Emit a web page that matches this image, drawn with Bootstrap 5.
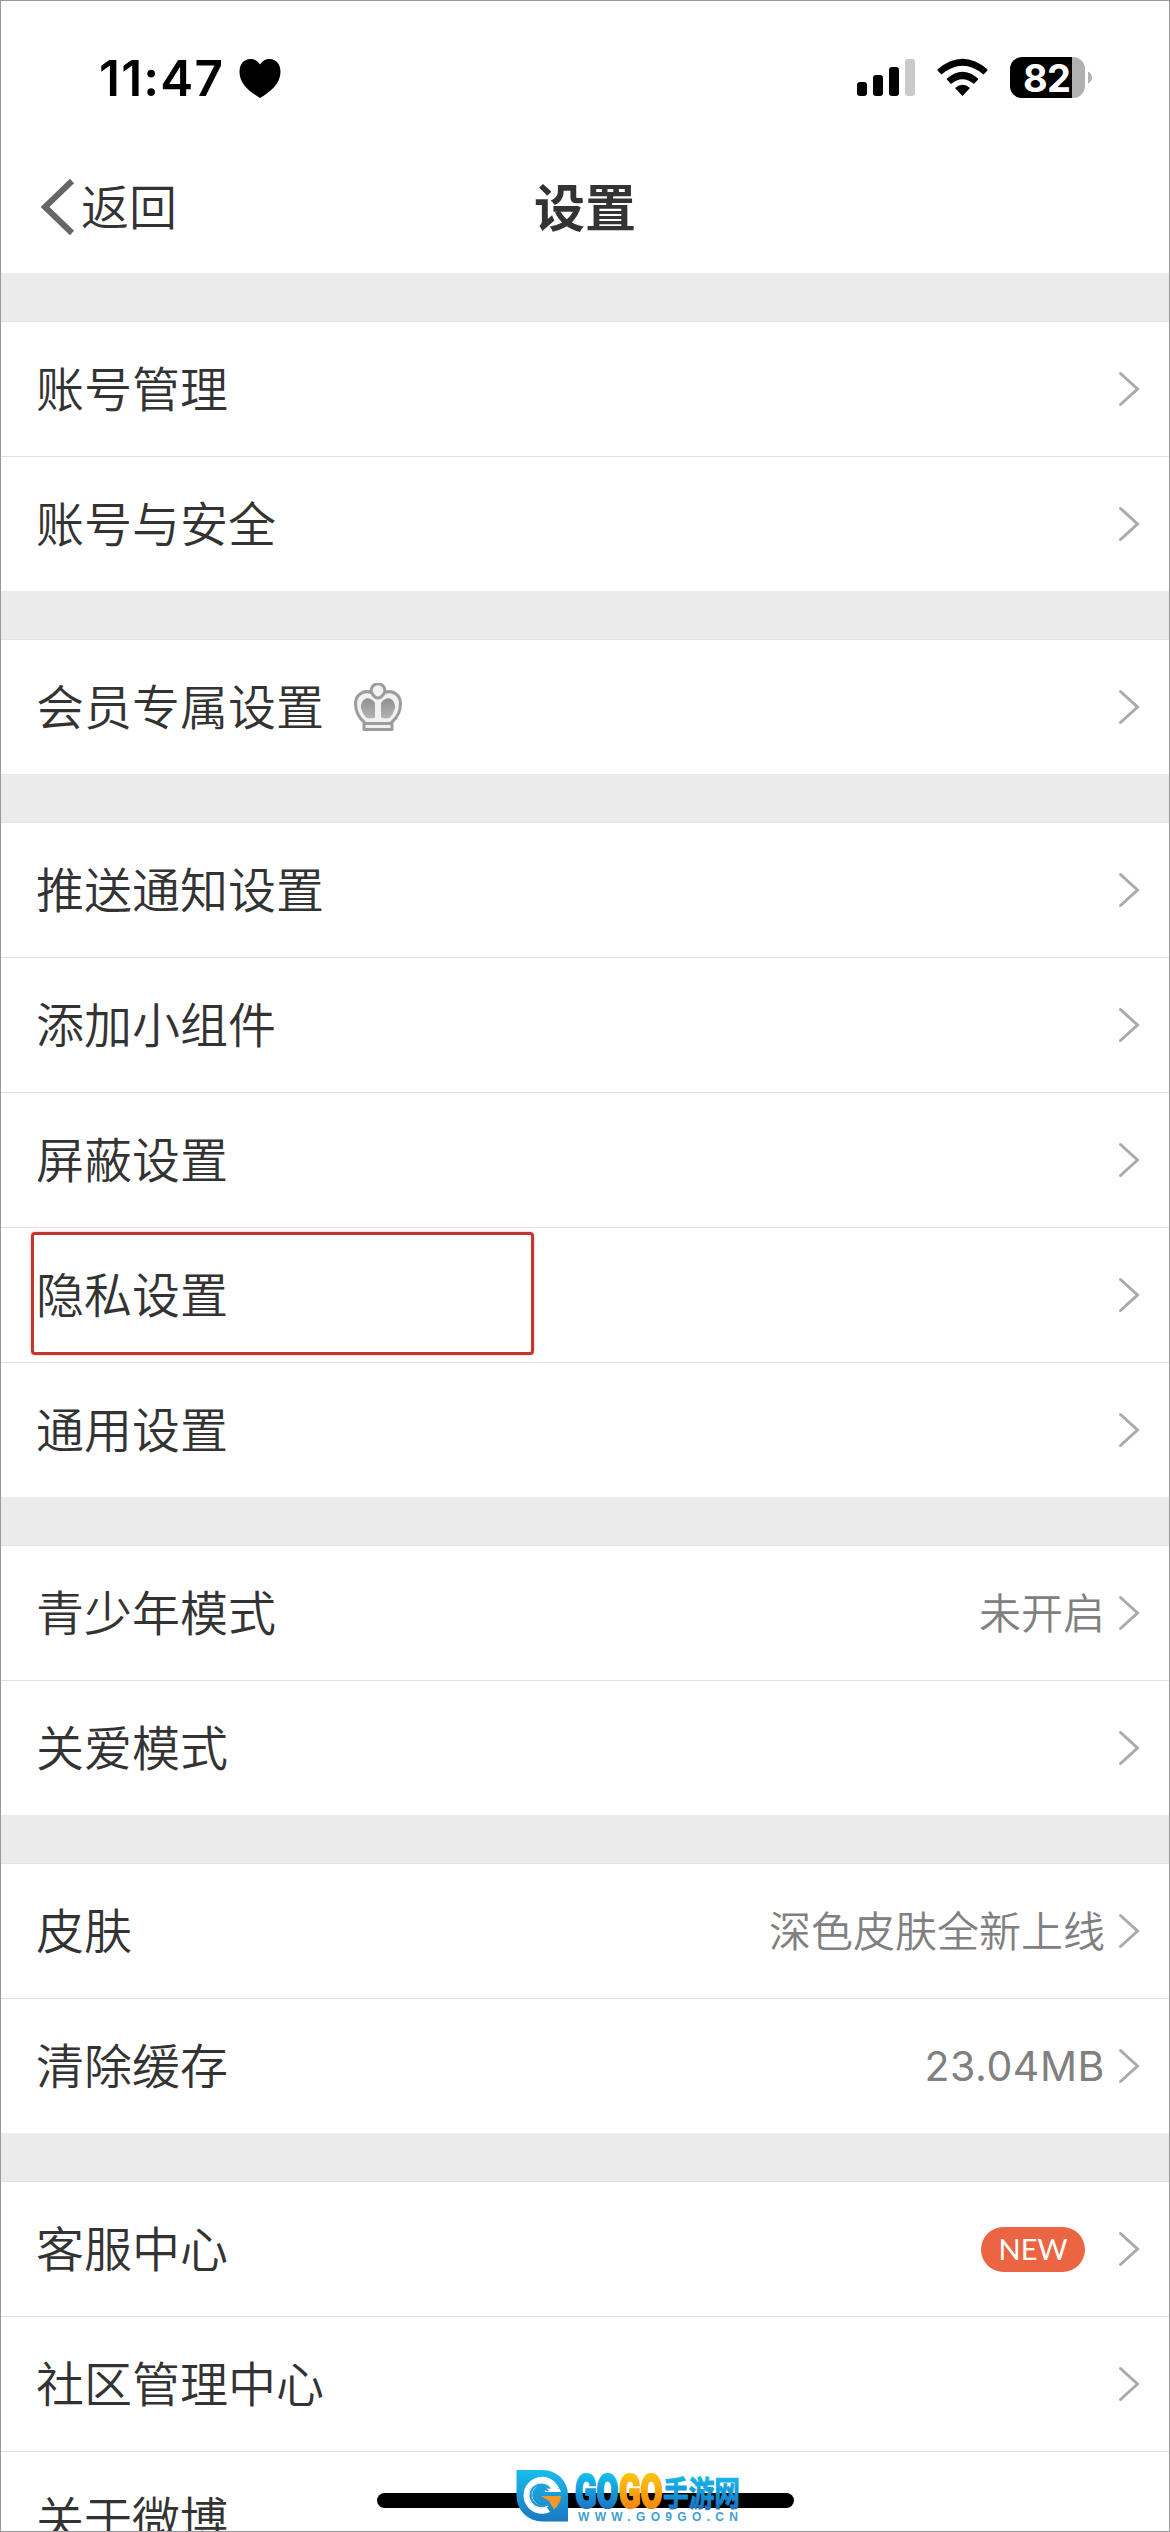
<!DOCTYPE html>
<html lang="zh-CN">
<head>
<meta charset="utf-8">
<meta name="viewport" content="width=device-width, initial-scale=1">
<title>设置</title>
<link href="https://cdn.jsdelivr.net/npm/bootstrap@5.3.0/dist/css/bootstrap.min.css" rel="stylesheet">
<style>
html,body{height:2532px;overflow:hidden}
body{font-family:Inter,"Noto Sans CJK SC",sans-serif;color:#333;background:#fff}
.phone{width:1170px;height:2532px;background:#ebebeb;border:1px solid #999}
.top-area{height:272px;background:#fff}
.status-bar{height:150px;padding:21px 76px 0 98px}
.status-left{gap:15px;margin-top:32px}
.status-icons{margin-top:34px}
.clock{font-size:49.5px;font-weight:600;color:#000;letter-spacing:1.2px;line-height:1}
.nav-bar{height:112px;padding:0 39px}
.back-link,.item-name{font-size:48px;line-height:1;font-weight:350;color:#333}
.back-link span{padding-top:2px}
.back-icon{margin-right:6px}
.item-name{padding-top:2px}
.page-title{font-size:51px;font-weight:700;line-height:1;color:#333;padding-top:3px}
.group{margin-top:49px;background:#fff;box-shadow:0 -1px 0 #e3e3e3}
.item{height:134px;padding:0 29px 0 35px}
.item+.item{height:135px;border-top:1px solid #e0e0e0}
.item-value{font-size:42px;line-height:1;color:#808080;font-weight:350;margin-right:13px;padding-top:1px}
.num{font-size:41px;font-weight:400;letter-spacing:.6px;padding-top:0}
.chev{width:22px;height:36px}
.crown{margin-left:30px}
.tag-new{width:104px;height:45px;background:#ec6542;font:400 29px/44px Lato,sans-serif;margin-right:33px}
.mark-box{left:30px;top:4px;width:503px;height:123px;border:3px solid #c4372f;border-radius:4px;box-shadow:0 0 2px #e88}
.home-bar{left:376px;top:2492px;width:417px;height:15px;border-radius:8px;background:#000}
.site-logo{left:507px;top:2461px}
</style>
<script src="https://cdn.jsdelivr.net/npm/bootstrap@5.3.0/dist/js/bootstrap.bundle.min.js"></script>
</head>
<body>
<svg width="0" height="0" class="position-absolute">
  <symbol id="chev" viewBox="0 0 22 36"><path d="M2.500 2.500 19.500 18 2.500 33.500" fill="none" stroke="#aaa" stroke-width="3" stroke-linecap="round"/></symbol>
</svg>
<div class="phone position-relative overflow-hidden">
  <header class="top-area">
    <div class="status-bar d-flex align-items-start justify-content-between">
      <div class="status-left d-flex align-items-center">
        <span class="clock">11:47</span>
        <svg width="42" height="39" viewBox="0 0 42 39"><path d="M21 5.500C18 1 14.500 0 11.500 0 5 0 .5 5 .5 13 .5 25 11 33 21 39 31 33 41.500 25 41.500 13 41.500 5 37 0 30.500 0 27.500 0 24 1 21 5.500Z"/></svg>
      </div>
      <svg width="238" height="44" viewBox="854 56 238 44" class="status-icons">
        <rect x="856" y="82" width="10" height="14" rx="3"/><rect x="872" y="75" width="10" height="21" rx="3"/><rect x="888" y="67" width="10" height="29" rx="3"/><rect x="904" y="59" width="10" height="37" rx="3" fill="#cacaca"/>
        <path d="M937 69Q961.500 48.500 986 69Q987 70 986 71L982.500 74.500Q961.500 57 940.500 74.500L937 71Q936 70 937 69ZM945.500 79Q961.500 64.500 977.500 79L973 84Q961.500 74.500 950 84ZM954 88Q961.500 81.500 969 88L961.500 96Z"/>
        <path d="M1021 57h50v41h-50a12 12 0 0 1-12-12V69a12 12 0 0 1 12-12Z"/><path d="M1071 57h1a12 12 0 0 1 12 12v17a12 12 0 0 1-12 12h-1ZM1087 71.500q4 2 4 6t-4 6Z" fill="#b1b1b1"/>
        <text x="1022" y="91.500" font-size="38" font-weight="700" fill="#fff" textLength="48">82</text>
      </svg>
    </div>
    <nav class="nav-bar d-flex align-items-center position-relative">
      <a class="back-link d-flex align-items-center text-decoration-none" href="#"><svg class="back-icon" width="35" height="58" viewBox="0 0 35 58"><path d="M32 3 5 29 32 55" fill="none" stroke="#666" stroke-width="6"/></svg><span>返回</span></a>
      <h1 class="page-title position-absolute top-50 start-50 translate-middle m-0">设置</h1>
    </nav>
  </header>
  <main>
    <section class="group">
      <div class="item d-flex align-items-center"><span class="item-name me-auto">账号管理</span><svg class="chev"><use href="#chev"/></svg></div>
      <div class="item d-flex align-items-center"><span class="item-name me-auto">账号与安全</span><svg class="chev"><use href="#chev"/></svg></div>
    </section>
    <section class="group">
      <div class="item d-flex align-items-center"><span class="item-name">会员专属设置</span>
        <svg class="crown me-auto" width="48" height="48" viewBox="0 0 48 48">
          <defs><linearGradient id="cg" x2="0" y2="1"><stop stop-color="#909090"/><stop offset="1" stop-color="#b4b4b4"/></linearGradient></defs>
          <path d="M10 39C4 34 1.500 27 1.500 20.500 1.500 12 9 6.500 17.500 9.500A6.800 6.800 0 1 1 30.500 9.500C39 6.500 46.500 12 46.500 20.500 46.500 27 44 34 38 39V46.500H10Z" fill="#f1f1f1" stroke="#9c9c9c" stroke-width="3" stroke-linejoin="round"/>
          <path d="M17.500 9.500Q20.500 15 24 15T30.500 9.500" fill="none" stroke="#9c9c9c" stroke-width="3"/>
          <path d="M21 34.500V20Q17 14.500 12 15.500 6.500 18 7 25 8.500 31 12.500 35 16.500 36 21 34.500ZM27 34.500V20Q31 14.500 36 15.500 41.500 18 41 25 39.500 31 35.500 35 31.500 36 27 34.500Z" fill="url(#cg)"/>
          <path d="M9 40.500H39" stroke="#9c9c9c" stroke-width="3"/>
        </svg>
        <svg class="chev"><use href="#chev"/></svg></div>
    </section>
    <section class="group">
      <div class="item d-flex align-items-center"><span class="item-name me-auto">推送通知设置</span><svg class="chev"><use href="#chev"/></svg></div>
      <div class="item d-flex align-items-center"><span class="item-name me-auto">添加小组件</span><svg class="chev"><use href="#chev"/></svg></div>
      <div class="item d-flex align-items-center"><span class="item-name me-auto">屏蔽设置</span><svg class="chev"><use href="#chev"/></svg></div>
      <div class="item d-flex align-items-center position-relative"><span class="item-name me-auto">隐私设置</span><svg class="chev"><use href="#chev"/></svg><span class="mark-box position-absolute"></span></div>
      <div class="item d-flex align-items-center"><span class="item-name me-auto">通用设置</span><svg class="chev"><use href="#chev"/></svg></div>
    </section>
    <section class="group">
      <div class="item d-flex align-items-center"><span class="item-name me-auto">青少年模式</span><span class="item-value">未开启</span><svg class="chev"><use href="#chev"/></svg></div>
      <div class="item d-flex align-items-center"><span class="item-name me-auto">关爱模式</span><svg class="chev"><use href="#chev"/></svg></div>
    </section>
    <section class="group">
      <div class="item d-flex align-items-center"><span class="item-name me-auto">皮肤</span><span class="item-value">深色皮肤全新上线</span><svg class="chev"><use href="#chev"/></svg></div>
      <div class="item d-flex align-items-center"><span class="item-name me-auto">清除缓存</span><span class="item-value num">23.04MB</span><svg class="chev"><use href="#chev"/></svg></div>
    </section>
    <section class="group">
      <div class="item d-flex align-items-center"><span class="item-name me-auto">客服中心</span><span class="tag-new rounded-pill text-white text-center">NEW</span><svg class="chev"><use href="#chev"/></svg></div>
      <div class="item d-flex align-items-center"><span class="item-name me-auto">社区管理中心</span><svg class="chev"><use href="#chev"/></svg></div>
      <div class="item d-flex align-items-center"><span class="item-name me-auto">关于微博</span></div>
    </section>
  </main>
  <div class="home-bar position-absolute"></div>
  <svg class="site-logo position-absolute" width="240" height="68" viewBox="0 0 240 68">
    <defs>
      <linearGradient id="bl" x2="0" y2="1"><stop stop-color="#18bdec"/><stop offset="1" stop-color="#1b78c2"/></linearGradient>
      <linearGradient id="bt" gradientUnits="userSpaceOnUse" x1="0" y1="11" x2="0" y2="47"><stop stop-color="#14c0ee"/><stop offset="1" stop-color="#1a74c4"/></linearGradient>
      <linearGradient id="ot" gradientUnits="userSpaceOnUse" x1="0" y1="11" x2="0" y2="47"><stop stop-color="#fdc50c"/><stop offset="1" stop-color="#f5860f"/></linearGradient>
    </defs>
    <path d="M8.500 8H35A25 25 0 0 1 60 33V59.500H34A25.500 25.500 0 0 1 8.500 34Z" fill="url(#bl)"/>
    <path d="M51 26A18.500 18.500 0 1 0 42 50L37.500 43A10.500 10.500 0 1 1 44 28Z" fill="#fff"/>
    <path d="M53 30H37V26.500H51.500Z" fill="#fff"/>
    <path d="M42 26A11 11 0 1 0 40 42M40 29A6.500 6.500 0 1 0 39 38" fill="none" stroke="#2398d2" stroke-width="2.200"/>
    <path d="M43 26A12.500 12.500 0 1 0 40 44" fill="none" stroke="#d8f0fa" stroke-width="1.200"/>
    <path d="M33 34H53Q52.500 42 46 47.500L41 39Z" fill="#f39a25"/>
    <g font-family="Roboto, sans-serif" font-weight="900" font-size="47.500" stroke-width="2.200">
      <text x="67" y="45.500" textLength="43.500" lengthAdjust="spacingAndGlyphs" fill="url(#bt)" stroke="url(#bt)">GO</text>
      <text x="111" y="45.500" textLength="43.500" lengthAdjust="spacingAndGlyphs" fill="url(#ot)" stroke="url(#ot)">GO</text>
    </g>
    <text x="155" y="43.500" textLength="77" lengthAdjust="spacingAndGlyphs" font-family="Noto Sans CJK SC, sans-serif" font-weight="700" font-size="34" fill="url(#bt)" stroke="url(#bt)" stroke-width="1">手游网</text>
    <text x="70" y="59" textLength="160" font-family="Liberation Sans, sans-serif" font-size="12" font-weight="700" fill="#3f9fd4">WWW.GO9GO.CN</text>
  </svg>
</div>
</body>
</html>
